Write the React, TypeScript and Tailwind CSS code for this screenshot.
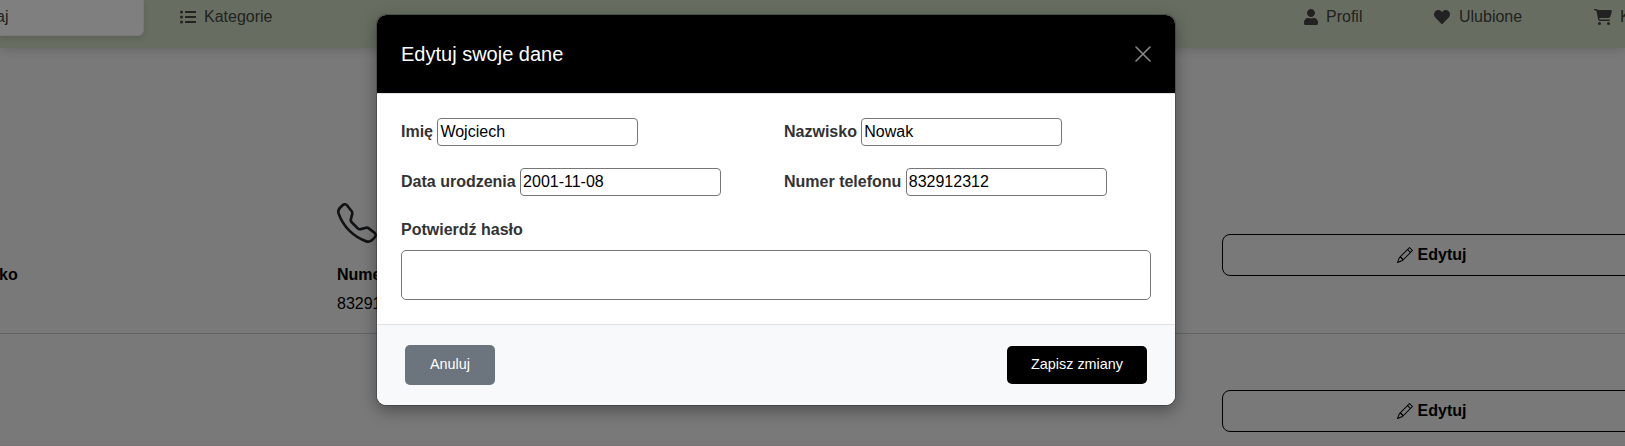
import React from "react";
import { FaListUl, FaUser, FaHeart } from "react-icons/fa";
import { FaCartShopping } from "react-icons/fa6";
import { BsTelephone, BsPencil } from "react-icons/bs";

function EditButton() {
  return (
    <button className="flex h-[42px] w-[419px] shrink-0 items-center justify-center gap-[5px] rounded-[8px] border border-black text-[16px] font-bold leading-6 text-black">
      <BsPencil className="size-4" />
      <span>Edytuj</span>
    </button>
  );
}

function Field({ label, value }: { label: string; value: string }) {
  return (
    <div className="flex h-7 items-center gap-[4.4px]">
      <label className="text-[16px] font-bold leading-6 text-[#333]">{label}</label>
      <input
        readOnly
        value={value}
        className="h-7 w-[201px] rounded-[4px] border border-[#767676] bg-white px-[2px] pb-px text-[16px] text-black outline-none"
      />
    </div>
  );
}

function Page() {
  return (
    <div className="flex h-[446px] flex-col border-b border-[#ece6e9] bg-[#f3f3f3]">
      <nav className="z-10 flex h-12 shrink-0 items-start bg-[#cfddc3] text-[16px] leading-6 text-[#444] shadow-[0_2px_10px_rgba(0,0,0,0.15)]">
        <div className="flex h-9 w-[144px] shrink-0 items-center rounded-br-[6px] border-r border-b border-[#f0f0f5] bg-white pb-px shadow-[0_2px_6px_rgba(0,0,0,0.15)]">
          <span className="-ml-[4px]">aj</span>
        </div>
        <div className="ml-9 mt-[5px] flex w-[1124px] shrink-0 items-center gap-2">
          <FaListUl className="size-4" />
          <span>Kategorie</span>
        </div>
        <div className="mt-[5px] flex w-[130px] shrink-0 items-center gap-2">
          <FaUser className="h-4 w-[14px]" />
          <span>Profil</span>
        </div>
        <div className="mt-[5px] flex w-[160px] shrink-0 items-center gap-[9px]">
          <FaHeart className="size-4" />
          <span>Ulubione</span>
        </div>
        <div className="mt-[5px] flex shrink-0 items-center gap-2">
          <FaCartShopping className="h-4 w-[18px]" />
          <span>Koszyk</span>
        </div>
      </nav>
      <section className="flex h-[286px] shrink-0 items-start border-b border-[#c2c5c5]">
        <div className="w-[337px] shrink-0 pt-[215px] text-[16px] font-bold leading-6 text-black">
          <span className="-ml-px">ko</span>
        </div>
        <div className="flex w-[885px] shrink-0 flex-col pt-[155px] text-[16px] text-black">
          <BsTelephone className="size-10 text-[#212529]" />
          <span className="mt-5 font-bold leading-6">Numer telefonu</span>
          <span className="mt-[5px] leading-6">832912312</span>
        </div>
        <div className="shrink-0 pt-[186px]">
          <EditButton />
        </div>
      </section>
      <section className="flex h-[111px] shrink-0 pl-[1222px] pt-[56px]">
        <EditButton />
      </section>
    </div>
  );
}

function Modal() {
  return (
    <div className="flex h-[392px] w-[800px] flex-col overflow-hidden rounded-[10px] border border-black/20 bg-white bg-clip-padding shadow-[0_5px_15px_rgba(0,0,0,0.35)]">
      <header className="flex h-[79px] shrink-0 items-center justify-between border-b border-[#dee2e6] bg-black px-6">
        <h5 className="text-[20px] leading-[30px] text-white">Edytuj swoje dane</h5>
        <svg viewBox="0 0 16 16" className="size-4 text-[#888]" fill="none" stroke="currentColor" strokeWidth="1.6" strokeLinecap="round">
          <path d="M1 1L15 15M15 1L1 15" />
        </svg>
      </header>
      <div className="flex h-[230px] shrink-0 flex-col px-6 pt-6">
        <div className="grid grid-cols-[383px_1fr] gap-y-[22px]">
          <Field label="Imię" value="Wojciech" />
          <Field label="Nazwisko" value="Nowak" />
          <Field label="Data urodzenia" value="2001-11-08" />
          <Field label="Numer telefonu" value="832912312" />
        </div>
        <label className="mt-[22px] text-[16px] font-bold leading-6 text-[#333]">Potwierdź hasło</label>
        <input readOnly type="password" className="mt-[8px] h-[50px] w-full rounded-[5px] border border-[#767676] outline-none" />
      </div>
      <footer className="flex grow items-center justify-between border-t border-[#dee2e6] bg-[#f8f9fa] px-7 text-[14.4px] font-medium text-white">
        <button className="h-10 w-[90px] rounded-[5px] bg-[#6c757d]">Anuluj</button>
        <button className="h-[38px] w-[140px] rounded-[5px] bg-black">Zapisz zmiany</button>
      </footer>
    </div>
  );
}

export default function App() {
  return (
    <div className="relative h-[446px] w-[1625px] overflow-hidden font-['Liberation_Sans',Arial,sans-serif]">
      <Page />
      <div className="absolute inset-0 z-20 bg-black/50 pl-[376px] pt-[14px]">
        <Modal />
      </div>
    </div>
  );
}
